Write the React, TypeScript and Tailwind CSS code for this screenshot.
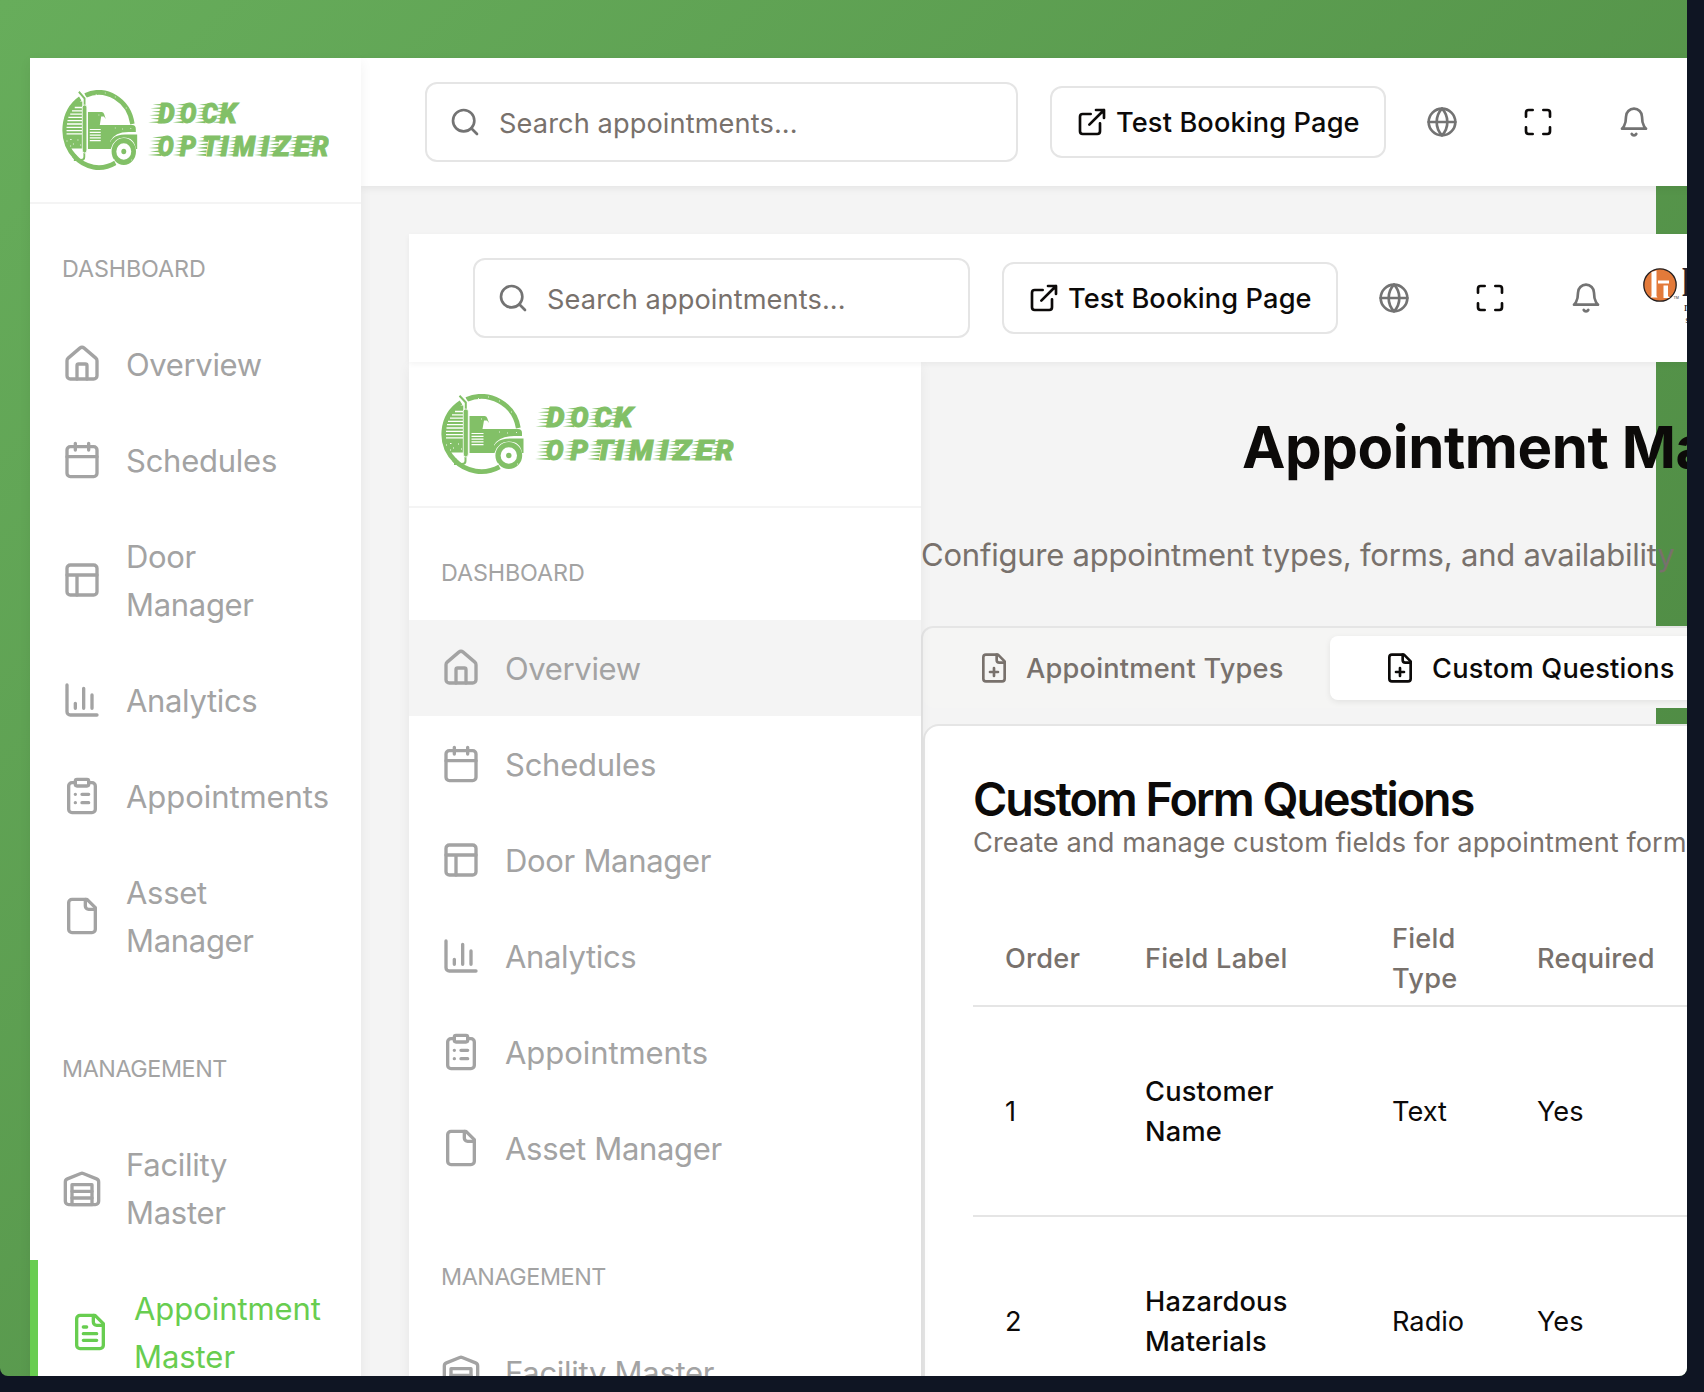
import React from "react";

type IconProps = { className?: string; children?: React.ReactNode; sw?: number };

function Svg({ className = "size-8", children, sw = 2 }: IconProps) {
  return (
    <svg
      viewBox="0 0 24 24"
      fill="none"
      stroke="currentColor"
      strokeWidth={sw}
      strokeLinecap="round"
      strokeLinejoin="round"
      className={`${className} shrink-0`}
    >
      {children}
    </svg>
  );
}

const fileBody = (
  <>
    <path d="M15 2H6a2 2 0 0 0-2 2v16a2 2 0 0 0 2 2h12a2 2 0 0 0 2-2V7Z" />
    <path d="M14 2v4a2 2 0 0 0 2 2h4" />
  </>
);

const icons = {
  home: (
    <>
      <path d="M15 21v-8a1 1 0 0 0-1-1h-4a1 1 0 0 0-1 1v8" />
      <path d="M3 10a2 2 0 0 1 .709-1.528l7-5.999a2 2 0 0 1 2.582 0l7 5.999A2 2 0 0 1 21 10v9a2 2 0 0 1-2 2H5a2 2 0 0 1-2-2z" />
    </>
  ),
  calendar: (
    <>
      <path d="M8 2v4M16 2v4M3 10h18" />
      <rect width="18" height="18" x="3" y="4" rx="2" />
    </>
  ),
  door: (
    <>
      <rect width="18" height="18" x="3" y="3" rx="2" />
      <path d="M3 9h18M9 21V9" />
    </>
  ),
  chart: <path d="M3 3v16a2 2 0 0 0 2 2h16M18 17V9M13 17V5M8 17v-3" />,
  clipboard: (
    <>
      <rect width="8" height="4" x="8" y="2" rx="1" />
      <path d="M16 4h2a2 2 0 0 1 2 2v14a2 2 0 0 1-2 2H6a2 2 0 0 1-2-2V6a2 2 0 0 1 2-2h2M12 11h4M12 16h4M8 11h.01M8 16h.01" />
    </>
  ),
  file: fileBody,
  warehouse: (
    <>
      <path d="M22 8.35V20a2 2 0 0 1-2 2H4a2 2 0 0 1-2-2V8.35A2 2 0 0 1 3.26 6.5l8-3.2a2 2 0 0 1 1.48 0l8 3.2A2 2 0 0 1 22 8.35Z" />
      <path d="M6 18h12M6 14h12" />
      <rect width="12" height="12" x="6" y="10" />
    </>
  ),
  fileText: (
    <>
      {fileBody}
      <path d="M10 9H8M16 13H8M16 17H8" />
    </>
  ),
  filePlus: (
    <>
      {fileBody}
      <path d="M9 15h6M12 18v-6" />
    </>
  ),
};

type Item = { icon: keyof typeof icons; label: string; hover?: boolean; active?: boolean; tracking: string };

const dashboard: Item[] = [
  { icon: "home", label: "Overview", tracking: "tracking-[-0.35px]" },
  { icon: "calendar", label: "Schedules", tracking: "tracking-[-0.25px]" },
  { icon: "door", label: "Door Manager", tracking: "tracking-[-0.31px]" },
  { icon: "chart", label: "Analytics", tracking: "tracking-[-0.33px]" },
  { icon: "clipboard", label: "Appointments", tracking: "tracking-[-0.06px]" },
  { icon: "file", label: "Asset Manager", tracking: "tracking-[-0.31px]" },
];

const letters: [string, number, number, number][] = [
  ["D", 105.5, 18, 33],
  ["O", 129.5, 18, 33],
  ["C", 153.5, 17, 33],
  ["K", 173, 18.5, 33],
  ["O", 105, 17.5, 65.6],
  ["P", 129.5, 17.5, 65.6],
  ["T", 154, 18, 65.6],
  ["I", 174, 9, 65.6],
  ["M", 188, 24, 65.6],
  ["I", 218.5, 9, 65.6],
  ["Z", 232, 18, 65.6],
  ["E", 254.500, 17.5, 65.6],
  ["R", 274.5, 18, 65.6],
];

function Logo({ className }: { className: string }) {
  return (
    <svg viewBox="0 0 293 80" preserveAspectRatio="none" className={className} fill="#82c067" stroke="none">
      <g fill="none" stroke="#82c067" strokeWidth="4.8">
        <path d="M25.5 5.540A37.500 37.500 0 0 1 77.300 34" />
        <path d="M13 65.700A37.500 37.500 0 0 0 58.500 72.800" />
        <path d="M20 8.500A37.500 37.500 0 0 0 14.500 67.200" />
      </g>
      <path d="M19 11.500C10 17 4 27 3 40v10h20V11.500Z" />
      <path
        d="M14 17.500H22M11 20.800H22M9 24.100H22M7 27.400H22M6 30.700H22M5.500 34H22M5 37.300H22M5 40.600H22M5 43.900H22"
        stroke="#fff"
        strokeWidth="1.300"
      />
      <path d="M2 47H25V58.500H6Z" />
      <path d="M5 51h1M9 49.500h1.500M12 54h1M17 50h1M20 55h1M9 56h1" stroke="#fff" strokeWidth="1" />
      <path d="M18.500 1.800L24.800 8.500V17" fill="none" stroke="#fff" strokeWidth="5" />
      <path d="M18.500 1.800L24.800 8.500V17M24.500 62v5q0 3-3.500 3H13" fill="none" stroke="#82c067" strokeWidth="2" />
      <path d="M22.300 17q0-2 2.500-2t2.500 2V60q0 3-2.500 3t-2.500-3Z" stroke="#fff" strokeWidth="0.800" />
      <path d="M28.500 22H43.500q2 0 2.700 2L48 29l-2-2.500H43L41.500 35H77q4 0 4 4v3H73Q58 42 53 51V59H28.500Z" />
      <path
        d="M30.500 39.500H42.500M30.500 42.300H42.500M30.500 45.100H42.500M30.500 47.900H42.500M30.500 50.700H42.500"
        stroke="#fff"
        strokeWidth="1.200"
      />
      <path d="M51 59Q52 44.500 69 44.500H82.500V59H81Q79.500 47.500 67.800 47.500Q57 47.500 53.500 59Z" />
      <circle cx="67.800" cy="61.500" r="10.800" fill="#fff" stroke="#82c067" strokeWidth="5.200" />
      <circle cx="67.800" cy="61.500" r="2.700" />
      <path
        d="M37 4.500h1M47 3h1M58 7h1M70 18h1M58 38h1M66 39h1M75 38.500h1M40 25h1M57 70h1M76 70h1"
        stroke="#fff"
        strokeWidth="0.800"
      />
      {letters.map(([ch, x, w, y], i) => {
        const lead = i === 0 || i === 4 ? 11 : 8;
        return (
          <g key={i}>
            {[0, 1, 2, 3, 4, 5].map((n) => (
              <path
                key={n}
                d={`M${x - lead + (n % 2 ? 0 : 2) + (5 - n) * 0.6} ${y - 18.2 + n * 3.5}L${x + 4 + (5 - n) * 0.6} ${y - 19.4 + n * 3.5}v2.200Z`}
              />
            ))}
            <text
              x={x}
              y={y}
              textLength={w}
              lengthAdjust="spacingAndGlyphs"
              fontFamily="Roboto"
              fontWeight="900"
              fontStyle="italic"
              fontSize="26.800"
              stroke="#82c067"
              strokeWidth="0.900"
            >
              {ch}
            </text>
          </g>
        );
      })}
    </svg>
  );
}

function SectionLabel({ children, className }: { children: string; className: string }) {
  return <div className={`pb-[31px] pl-8 text-[23.300px] leading-8 ${className}`}>{children}</div>;
}

function NavItem({ item, wrap }: { item: Item; wrap?: boolean }) {
  const tone = item.active ? "border-l-8 border-[#68cd50] text-[#68cd50]" : item.hover ? "bg-[#f4f4f4]" : "";
  return (
    <div className={`flex items-center gap-6 py-6 pl-8 text-[31px] leading-[48px] ${item.tracking} ${tone}`}>
      <Svg className="size-10">{icons[item.icon]}</Svg>
      <span className={`translate-y-px ${wrap ? "w-[203px]" : "whitespace-nowrap"}`}>{item.label}</span>
    </div>
  );
}

function SearchBox({ className }: { className: string }) {
  return (
    <div
      className={`flex h-20 shrink-0 items-center gap-[18px] rounded-xl border-2 border-[#e5e5e5] bg-white pl-[22px] ${className}`}
    >
      <Svg className="size-8 text-[#737373]">
        <circle cx="11" cy="11" r="8" />
        <path d="m21 21-4.300-4.300" />
      </Svg>
      <span className="translate-y-0.5 text-[27.200px] tracking-[0.100px] text-[#78716c]">Search appointments...</span>
    </div>
  );
}

function HeaderActions() {
  return (
    <>
      <div className="ml-8 flex h-[72px] w-[336px] shrink-0 items-center gap-2 rounded-xl border-2 border-[#e5e5e5] pl-6 text-[27.200px] font-medium tracking-[0.130px] whitespace-nowrap text-[#0c0a09]">
        <Svg>
          <path d="M15 3h6v6M10 14 21 3M18 13v6a2 2 0 0 1-2 2H5a2 2 0 0 1-2-2V8a2 2 0 0 1 2-2h6" />
        </Svg>
        <span className="translate-y-px">Test Booking Page</span>
      </div>
      <div className="ml-10 flex shrink-0 gap-16">
        <Svg className="size-8 text-[#737373]">
          <circle cx="12" cy="12" r="10" />
          <path d="M12 2a14.500 14.500 0 0 0 0 20 14.500 14.500 0 0 0 0-20M2 12h20" />
        </Svg>
        <Svg className="size-8 text-[#0c0a09]">
          <path d="M8 3H5a2 2 0 0 0-2 2v3M21 8V5a2 2 0 0 0-2-2h-3M3 16v3a2 2 0 0 0 2 2h3M16 21h3a2 2 0 0 0 2-2v-3" />
        </Svg>
        <Svg className="size-8 text-[#737373]">
          <path d="M6 8a6 6 0 0 1 12 0c0 7 3 9 3 9H3s3-2 3-9M10.300 21a1.940 1.940 0 0 0 3.400 0" />
        </Svg>
      </div>
    </>
  );
}

function CompanyLogo() {
  return (
    <svg viewBox="0 0 60 66" className="mt-8 ml-[41px] h-[66px] w-[60px] shrink-0 self-start">
      <circle cx="17" cy="19" r="16.200" fill="#e37a3a" stroke="#241f1f" strokeWidth="1.300" />
      <g fill="#fff">
        <path d="M8.500 6l5-1.500V30l1 1.500H7.500l1-1.500Z" />
        <path d="M15 14.500H26V17.500H15Z" />
        <path d="M20.500 19.500h4.500V30l2 2h-6.500Z" />
      </g>
      <text x="30.500" y="33" fontFamily="Liberation Sans" fontSize="3.800" fill="#333">TM</text>
      <g fontFamily="Liberation Serif" fill="#241f2a">
        <text x="38.500" y="30" fontSize="40" fontWeight="700">h</text>
        <text x="41" y="45" fontSize="13">r</text>
        <text x="42.500" y="57" fontSize="10">s</text>
      </g>
    </svg>
  );
}

const rows = [
  { order: "1", label: ["Customer", "Name"], type: "Text", req: "Yes" },
  { order: "2", label: ["Hazardous", "Materials"], type: "Radio", req: "Yes" },
];

function Sidebar({ nested }: { nested?: boolean }) {
  return (
    <aside
      className={`relative z-10 shrink-0 bg-white text-[#a3a3a3] shadow-[0_4px_12px_rgba(0,0,0,0.06)] ${nested ? "h-[1100px] w-[512px]" : "h-[1400px] w-[331px]"}`}
    >
      <div className="h-[146px] border-b-2 border-[#f4f4f4] pt-8 pl-8">
        <Logo className={nested ? "h-20 w-[293px]" : "h-20 w-[267px]"} />
      </div>
      <SectionLabel className="pt-[49px] tracking-[-0.100px]">DASHBOARD</SectionLabel>
      {dashboard.map((it, i) => (
        <NavItem key={it.label} item={{ ...it, hover: nested && i === 0 }} wrap={!nested} />
      ))}
      <SectionLabel className="pt-[65px] tracking-[-0.400px]">MANAGEMENT</SectionLabel>
      <NavItem item={{ icon: "warehouse", label: "Facility Master", tracking: "tracking-[-0.28px]" }} wrap={!nested} />
      {!nested && (
        <NavItem
          item={{ icon: "fileText", label: "Appointment Master", active: true, tracking: "tracking-[-0.06px]" }}
          wrap
        />
      )}
    </aside>
  );
}

export default function App() {
  return (
    <div className="h-[1392px] w-[1704px] overflow-hidden bg-[#0f1523] font-['Inter',sans-serif]">
      <div className="h-[1376px] w-[1687px] overflow-hidden rounded-b-lg bg-linear-[135deg,#67ad5b,#4a843f] pt-[58px] pl-[30px]">
        <div className="flex w-[1800px]">
          <Sidebar />
          <div className="flex flex-col">
            <header className="relative flex h-32 w-[1469px] items-center bg-white pl-16 shadow-[0_2px_8px_rgba(0,0,0,0.07)]">
              <SearchBox className="w-[593px]" />
              <HeaderActions />
            </header>
            <div className="h-[1300px] w-[1295px] bg-[#f4f4f4] pt-12 pl-12">
              <div className="w-[1420px]">
                <header className="relative z-20 flex h-32 items-center bg-white pl-16 shadow-[0_2px_6px_rgba(0,0,0,0.05)]">
                  <SearchBox className="w-[497px]" />
                  <HeaderActions />
                  <CompanyLogo />
                </header>
                <div className="flex">
                  <Sidebar nested />
                  <main className="w-[908px] shrink-0 whitespace-nowrap text-[#0c0a09]">
                    <h1 className="pt-[49px] pl-[321px] text-[58.200px] leading-[72px] font-bold tracking-[-0.420px]">
                      Appointment Master
                    </h1>
                    <p className="pt-12 pb-12 text-[31px] leading-[47px] tracking-[-0.220px] text-[#78716c]">
                      Configure appointment types, forms, and availability
                    </p>
                    <div className="rounded-xl border-2 border-[#e5e5e5]">
                      <div className="flex rounded-xl bg-[#f5f5f4] p-2 text-[27.200px] font-medium tracking-[0.220px]">
                        <div className="flex h-16 w-[399px] items-center gap-4 pl-[47px] text-[#78716c]">
                          <Svg>{icons.filePlus}</Svg>
                          <span className="translate-y-px">Appointment Types</span>
                        </div>
                        <div className="flex h-16 w-[420px] items-center gap-4 rounded-lg bg-white pl-[54px] shadow-[0_2px_6px_rgba(0,0,0,0.08)]">
                          <Svg>{icons.filePlus}</Svg>
                          <span className="translate-y-px">Custom Questions</span>
                        </div>
                      </div>
                      <section className="mt-4 rounded-2xl border-2 border-[#e5e5e5] bg-white px-12 pt-[49px]">
                        <h2 className="text-[46.600px] leading-[48px] font-semibold tracking-[-2px]">
                          Custom Form Questions
                        </h2>
                        <p className="text-[27.200px] leading-10 tracking-[0.040px] text-[#78716c]">
                          Create and manage custom fields for appointment forms
                        </p>
                        <div className="mt-[46px] grid h-[98px] grid-cols-[140px_247px_145px_1fr] items-center border-b-2 border-[#e5e5e5] pt-1 pl-8 text-[27.200px] leading-10 font-medium tracking-[0.220px] text-[#78716c]">
                          <span>Order</span>
                          <span>Field Label</span>
                          <span>
                            Field
                            <br />
                            Type
                          </span>
                          <span>Required</span>
                        </div>
                        {rows.map((r) => (
                          <div
                            key={r.order}
                            className="grid h-[210px] grid-cols-[140px_247px_145px_1fr] items-center border-b-2 border-[#e5e5e5] pt-px pl-8 text-[27.200px] leading-10"
                          >
                            <span>{r.order}</span>
                            <span className="font-medium tracking-[0.220px]">
                              {r.label[0]}
                              <br />
                              {r.label[1]}
                            </span>
                            <span>{r.type}</span>
                            <span>{r.req}</span>
                          </div>
                        ))}
                      </section>
                    </div>
                  </main>
                </div>
              </div>
            </div>
          </div>
        </div>
      </div>
    </div>
  );
}
